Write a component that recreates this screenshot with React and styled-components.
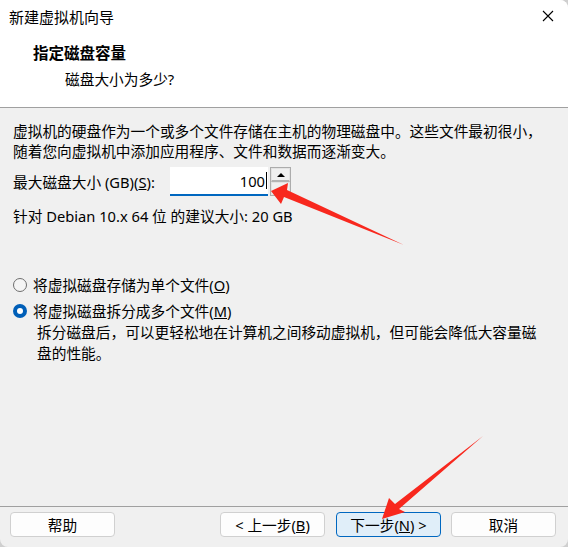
import React from "react";
import styled, { createGlobalStyle } from "styled-components";

const Global = createGlobalStyle`
  html, body { margin: 0; padding: 0; background: #cfcfcf; }
  body { font-family: "Noto Sans", "Noto Sans CJK SC", sans-serif; color: #000; }
  * { box-sizing: border-box; }
`;

const FONT = `"Noto Sans", "Noto Sans CJK SC", sans-serif`;

const Window = styled.div`
  position: relative;
  width: 568px;
  height: 547px;
  display: flex;
  flex-direction: column;
  background: #f0f0f0;
  border-radius: 0 8px 8px 8px;
  overflow: hidden;
  font-family: ${FONT};
  font-size: 14.7px;
`;

const Top = styled.div`
  height: 108px;
  background: #fff;
  border-bottom: 1px solid #a0a0a0;
  display: flex;
  flex-direction: column;
`;

const TitleBar = styled.div`
  height: 34px;
  display: flex;
  align-items: center;
  justify-content: space-between;
  padding: 0 14px 0 9px;
`;

const TitleText = styled.div`
  font-size: 15px;
  line-height: 20px;
`;

const Close = styled.div`
  width: 12px;
  height: 12px;
  display: flex;
  margin-top: -2px;
`;

const Header = styled.div`
  padding: 9px 0 0 33px;
  display: flex;
  flex-direction: column;
  gap: 6px;
`;

const HeaderTitle = styled.div`
  font-size: 15.5px;
  font-weight: 700;
  line-height: 20px;
`;

const HeaderSub = styled.div`
  padding-left: 32px;
  line-height: 20px;
`;

const Body = styled.div`
  flex: 1;
  padding: 13px 13px 0 13px;
  display: flex;
  flex-direction: column;
`;

const Para = styled.div`
  line-height: 20px;
  white-space: nowrap;
  margin-top: ${(p) => p.$mt || 0}px;
`;

const SizeRow = styled.div`
  margin-top: 6px;
  display: flex;
  align-items: stretch;
  height: 29px;
`;

const Label = styled.div`
  width: 157px;
  display: flex;
  align-items: center;
  line-height: 20px;
  white-space: nowrap;
`;

const Input = styled.div`
  width: 98px;
  background: #fff;
  border-bottom: 2px solid #0067c0;
  display: flex;
  align-items: center;
  justify-content: flex-end;
  padding-right: 1px;
  line-height: 20px;
`;

const Caret = styled.span`
  display: inline-block;
  width: 1px;
  height: 17px;
  background: #000;
  margin-left: 1px;
`;

const Spin = styled.div`
  margin-left: 2px;
  width: 21px;
  border: 1px solid #acacac;
  background: #f0f0f0;
  display: flex;
  flex-direction: column;
`;

const SpinBtn = styled.div`
  flex: 1;
  display: flex;
  align-items: center;
  justify-content: center;
  border: 1px solid #e3e3e3;
  border-bottom: ${(p) => (p.$top ? "2px solid #b4b4b4" : "1px solid #e3e3e3")};
`;

const UpTri = styled.div`
  width: 0;
  height: 0;
  border-left: 4px solid transparent;
  border-right: 4px solid transparent;
  border-bottom: 4px solid #000;
`;

const RadioGroup = styled.div`
  margin-top: 49px;
  display: flex;
  flex-direction: column;
  gap: 6px;
`;

const RadioRow = styled.div`
  display: flex;
  align-items: center;
  gap: 6px;
  line-height: 20px;
`;

const RadioCircle = styled.div`
  width: 14px;
  height: 14px;
  border-radius: 50%;
  display: flex;
  align-items: center;
  justify-content: center;
  background: ${(p) => (p.$on ? "#005fb8" : "#f5f5f5")};
  border: ${(p) => (p.$on ? "none" : "1px solid #6e6e6e")};
  &::after {
    content: "";
    display: ${(p) => (p.$on ? "block" : "none")};
    width: 6px;
    height: 6px;
    border-radius: 50%;
    background: #fff;
  }
`;

const Desc = styled.div`
  padding-left: 24px;
  margin-top: -5px;
  line-height: 21px;
  white-space: nowrap;
`;

const Footer = styled.div`
  border-top: 1px solid #a0a0a0;
  padding: 5px 12px 10px 10px;
  display: flex;
  align-items: center;
`;

const Button = styled.div`
  width: 105px;
  height: 25px;
  border-radius: 4px;
  display: flex;
  align-items: center;
  justify-content: center;
  line-height: 20px;
  white-space: nowrap;
  background: ${(p) => (p.$primary ? "#e0eef9" : "#fdfdfd")};
  border: 1px solid ${(p) => (p.$primary ? "#0067c0" : "#d0d0d0")};
  margin-left: ${(p) => p.$ml || 0}px;
`;

const Spacer = styled.div`
  flex: 1;
`;

const Overlay = styled.svg`
  position: absolute;
  left: 0;
  top: 0;
  pointer-events: none;
`;

export default function App() {
  return (
    <>
      <Global />
      <Window>
        <Top>
          <TitleBar>
            <TitleText>新建虚拟机向导</TitleText>
            <Close>
              <svg width="12" height="12" viewBox="0 0 12 12">
                <path d="M1 1L11 11M11 1L1 11" stroke="#000" strokeWidth="1.1" fill="none" />
              </svg>
            </Close>
          </TitleBar>
          <Header>
            <HeaderTitle>指定磁盘容量</HeaderTitle>
            <HeaderSub>磁盘大小为多少?</HeaderSub>
          </Header>
        </Top>
        <Body>
          <Para>
            虚拟机的硬盘作为一个或多个文件存储在主机的物理磁盘中。这些文件最初很小，
            <br />
            随着您向虚拟机中添加应用程序、文件和数据而逐渐变大。
          </Para>
          <SizeRow>
            <Label>
              最大磁盘大小 (GB)(<u>S</u>):
            </Label>
            <Input>
              100<Caret />
            </Input>
            <Spin>
              <SpinBtn $top>
                <UpTri />
              </SpinBtn>
              <SpinBtn />
            </Spin>
          </SizeRow>
          <Para $mt={10}>针对 Debian 10.x 64 位 的建议大小: 20 GB</Para>
          <RadioGroup>
            <RadioRow>
              <RadioCircle />
              <span>
                将虚拟磁盘存储为单个文件(<u>O</u>)
              </span>
            </RadioRow>
            <RadioRow>
              <RadioCircle $on />
              <span>
                将虚拟磁盘拆分成多个文件(<u>M</u>)
              </span>
            </RadioRow>
            <Desc>
              拆分磁盘后，可以更轻松地在计算机之间移动虚拟机，但可能会降低大容量磁
              <br />
              盘的性能。
            </Desc>
          </RadioGroup>
        </Body>
        <Footer>
          <Button>帮助</Button>
          <Spacer />
          <Button>
            &lt; 上一步(<u>B</u>)
          </Button>
          <Button $primary $ml={11}>
            下一步(<u>N</u>) &gt;
          </Button>
          <Button $ml={10}>取消</Button>
        </Footer>
        <Overlay width="568" height="547" viewBox="0 0 568 547">
          <polygon
            points="271,191 288,183 287,190 404,245 284,197 281,204"
            fill="#f8281e"
          />
          <polygon
            points="382,519 389,498 395,504 483,436 399,509 405,512"
            fill="#f8281e"
          />
        </Overlay>
      </Window>
    </>
  );
}
